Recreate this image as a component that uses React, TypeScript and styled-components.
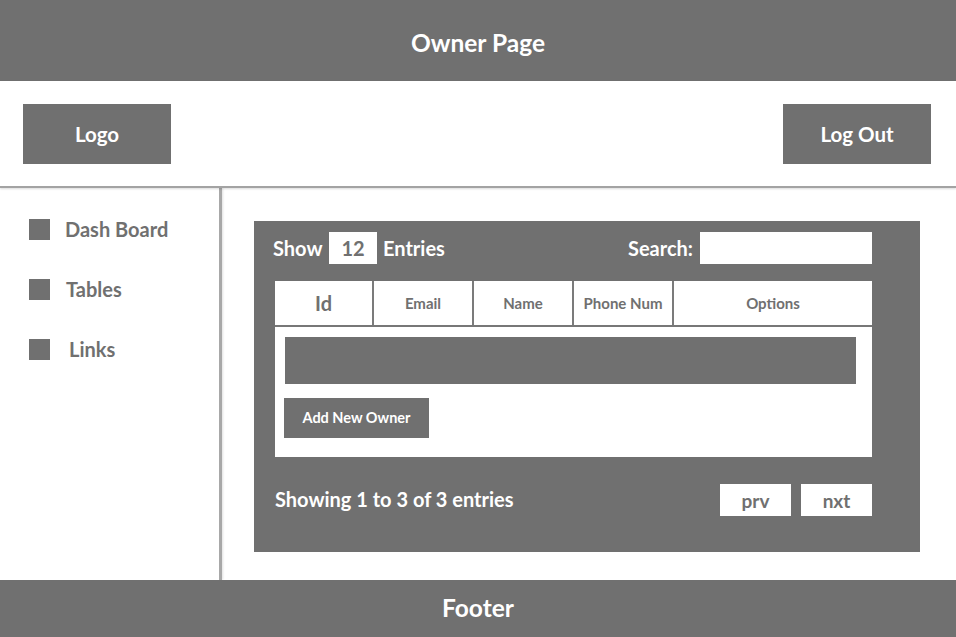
import React from "react";
import styled, { createGlobalStyle } from "styled-components";

const GRAY = "#707070";

const Global = createGlobalStyle`
  html, body { margin: 0; padding: 0; background: #fff; }
  body { font-family: Lato, "Open Sans", sans-serif; }
  * { box-sizing: border-box; }
`;

const Page = styled.div`
  width: 956px;
  height: 637px;
  display: flex;
  flex-direction: column;
  overflow: hidden;
`;

const TitleBar = styled.header`
  height: 81px;
  flex: none;
  background: ${GRAY};
  color: #fff;
  display: flex;
  align-items: center;
  justify-content: center;
  padding-top: 4px;
  font-size: 24.5px;
  font-weight: 700;
`;

const TopBar = styled.div`
  height: 107px;
  flex: none;
  display: flex;
  justify-content: space-between;
  align-items: flex-start;
  padding: 23px 25px 0 23px;
  border-bottom: 2px solid #a3a3a3;
  box-shadow: 0 1px 2px rgba(0, 0, 0, 0.15);
  position: relative;
  z-index: 1;
`;

const BlockButton = styled.div`
  width: 148px;
  height: 60px;
  background: ${GRAY};
  color: #fff;
  display: flex;
  align-items: center;
  justify-content: center;
  font-size: 20.5px;
  font-weight: 700;
`;

const Middle = styled.div`
  flex: 1;
  display: flex;
  min-height: 0;
`;

const Sidebar = styled.nav`
  width: 222px;
  flex: none;
  border-right: 3px solid #a8a8a8;
  box-shadow: 1px 0 2px rgba(0, 0, 0, 0.12);
  padding: 31px 0 0 29px;
  display: flex;
  flex-direction: column;
  gap: 39px;
`;

const NavItem = styled.div<{ $offset: number }>`
  display: flex;
  align-items: center;
  height: 21px;
  gap: ${(p) => p.$offset}px;
  color: ${GRAY};
  font-size: 20px;
  font-weight: 700;
  line-height: 1;
  padding-bottom: 2px;
`;

const NavSquare = styled.span`
  width: 21px;
  height: 21px;
  background: ${GRAY};
  flex: none;
  margin-bottom: -2px;
`;

const Main = styled.main`
  flex: 1;
  padding: 33px 36px 0 32px;
`;

const Panel = styled.section`
  background: ${GRAY};
  height: 331px;
  padding: 11px 48px 0 21px;
  display: flex;
  flex-direction: column;
  color: #fff;
`;

const Controls = styled.div`
  height: 32px;
  display: flex;
  align-items: center;
  font-size: 20px;
  font-weight: 700;
`;

const ShowLabel = styled.span`
  margin-left: -2px;
  width: 56px;
`;

const CountBox = styled.span`
  width: 48px;
  height: 32px;
  background: #fff;
  color: ${GRAY};
  display: flex;
  align-items: center;
  justify-content: center;
  margin-right: 6px;
`;

const Spacer = styled.span`
  flex: 1;
`;

const SearchLabel = styled.span`
  margin-right: 7px;
`;

const SearchBox = styled.span`
  width: 172px;
  height: 32px;
  background: #fff;
`;

const Table = styled.div`
  margin-top: 17px;
  background: #fff;
  display: flex;
  flex-direction: column;
`;

const HeadRow = styled.div`
  display: grid;
  grid-template-columns: 99px 100px 100px 100px 1fr;
  height: 46px;
  border-bottom: 2px solid #777;
`;

const HeadCell = styled.div<{ $big?: boolean; $last?: boolean }>`
  display: flex;
  align-items: center;
  justify-content: center;
  color: ${GRAY};
  font-weight: 700;
  font-size: ${(p) => (p.$big ? 20 : 15)}px;
  padding-bottom: 1px;
  border-right: ${(p) => (p.$last ? "none" : "2px solid #7b7b7b")};
`;

const Body = styled.div`
  padding: 10px 16px 19px 10px;
  display: flex;
  flex-direction: column;
  align-items: flex-start;
  gap: 14px;
`;

const RowBar = styled.div`
  align-self: stretch;
  height: 47px;
  background: ${GRAY};
`;

const AddButton = styled.div`
  width: 145px;
  height: 40px;
  margin-left: -1px;
  background: ${GRAY};
  color: #fff;
  display: flex;
  align-items: center;
  justify-content: center;
  padding-bottom: 2px;
  font-size: 14.5px;
  font-weight: 700;
`;

const Pager = styled.div`
  margin-top: 27px;
  height: 32px;
  display: flex;
  align-items: center;
  gap: 10px;
  font-size: 20px;
  font-weight: 700;
`;

const Summary = styled.span`
  padding-bottom: 3px;
`;

const PageBox = styled.span`
  width: 71px;
  height: 32px;
  background: #fff;
  color: ${GRAY};
  display: flex;
  align-items: center;
  justify-content: center;
  font-size: 19px;
`;

const Footer = styled.footer`
  height: 57px;
  flex: none;
  background: ${GRAY};
  color: #fff;
  display: flex;
  align-items: center;
  justify-content: center;
  padding-bottom: 2px;
  font-size: 24.5px;
  font-weight: 700;
`;

const navItems = [
  { label: "Dash Board", offset: 15 },
  { label: "Tables", offset: 16 },
  { label: "Links", offset: 19 },
];

const columns = ["Id", "Email", "Name", "Phone Num", "Options"];

export default function App() {
  return (
    <Page>
      <Global />
      <TitleBar>Owner Page</TitleBar>
      <TopBar>
        <BlockButton>Logo</BlockButton>
        <BlockButton>Log Out</BlockButton>
      </TopBar>
      <Middle>
        <Sidebar>
          {navItems.map((n) => (
            <NavItem key={n.label} $offset={n.offset}>
              <NavSquare />
              {n.label}
            </NavItem>
          ))}
        </Sidebar>
        <Main>
          <Panel>
            <Controls>
              <ShowLabel>Show</ShowLabel>
              <CountBox>12</CountBox>
              <span>Entries</span>
              <Spacer />
              <SearchLabel>Search:</SearchLabel>
              <SearchBox />
            </Controls>
            <Table>
              <HeadRow>
                {columns.map((c, i) => (
                  <HeadCell key={c} $big={i === 0} $last={i === columns.length - 1}>
                    {c}
                  </HeadCell>
                ))}
              </HeadRow>
              <Body>
                <RowBar />
                <AddButton>Add New Owner</AddButton>
              </Body>
            </Table>
            <Pager>
              <Summary>Showing 1 to 3 of 3 entries</Summary>
              <Spacer />
              <PageBox>prv</PageBox>
              <PageBox>nxt</PageBox>
            </Pager>
          </Panel>
        </Main>
      </Middle>
      <Footer>Footer</Footer>
    </Page>
  );
}
